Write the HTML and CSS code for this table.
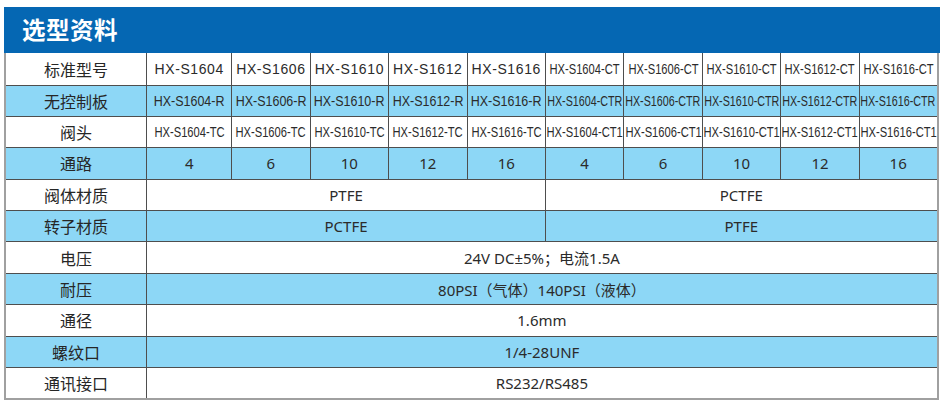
FILE: index.html
```html
<!DOCTYPE html>
<html lang="zh-CN">
<head>
<meta charset="utf-8">
<title>选型资料</title>
<link rel="stylesheet" href="styles.css">
</head>
<body>
<div class="sheet">
  <div class="title-bar"><h1 class="title">选型资料</h1></div>
  <table class="spec">
    <colgroup>
      <col class="c-label"><col class="c-first">
      <col class="c-data"><col class="c-data"><col class="c-data"><col class="c-data">
      <col class="c-data"><col class="c-data"><col class="c-data"><col class="c-data"><col class="c-data">
    </colgroup>
    <tbody>
      <tr class="row-top">
        <th>标准型号</th>
        <td class="wide">HX-S1604</td><td class="wide">HX-S1606</td><td class="wide">HX-S1610</td><td class="wide">HX-S1612</td><td class="wide">HX-S1616</td>
        <td><span class="fit"><span class="sq">HX-S1604-CT</span></span></td>
        <td><span class="fit"><span class="sq">HX-S1606-CT</span></span></td>
        <td><span class="fit"><span class="sq">HX-S1610-CT</span></span></td>
        <td><span class="fit"><span class="sq">HX-S1612-CT</span></span></td>
        <td><span class="fit"><span class="sq">HX-S1616-CT</span></span></td>
      </tr>
      <tr class="alt">
        <th>无控制板</th>
        <td><span class="fit"><span class="sq sq-r">HX-S1604-R</span></span></td>
        <td><span class="fit"><span class="sq sq-r">HX-S1606-R</span></span></td>
        <td><span class="fit"><span class="sq sq-r">HX-S1610-R</span></span></td>
        <td><span class="fit"><span class="sq sq-r">HX-S1612-R</span></span></td>
        <td><span class="fit"><span class="sq sq-r">HX-S1616-R</span></span></td>
        <td><span class="fit"><span class="sq sq-ctr">HX-S1604-CTR</span></span></td>
        <td><span class="fit"><span class="sq sq-ctr">HX-S1606-CTR</span></span></td>
        <td><span class="fit"><span class="sq sq-ctr">HX-S1610-CTR</span></span></td>
        <td><span class="fit"><span class="sq sq-ctr">HX-S1612-CTR</span></span></td>
        <td><span class="fit"><span class="sq sq-ctr">HX-S1616-CTR</span></span></td>
      </tr>
      <tr>
        <th>阀头</th>
        <td><span class="fit"><span class="sq">HX-S1604-TC</span></span></td>
        <td><span class="fit"><span class="sq">HX-S1606-TC</span></span></td>
        <td><span class="fit"><span class="sq">HX-S1610-TC</span></span></td>
        <td><span class="fit"><span class="sq">HX-S1612-TC</span></span></td>
        <td><span class="fit"><span class="sq">HX-S1616-TC</span></span></td>
        <td><span class="fit"><span class="sq">HX-S1604-CT1</span></span></td>
        <td><span class="fit"><span class="sq">HX-S1606-CT1</span></span></td>
        <td><span class="fit"><span class="sq">HX-S1610-CT1</span></span></td>
        <td><span class="fit"><span class="sq">HX-S1612-CT1</span></span></td>
        <td><span class="fit"><span class="sq">HX-S1616-CT1</span></span></td>
      </tr>
      <tr class="alt">
        <th>通路</th>
        <td>4</td><td>6</td><td>10</td><td>12</td><td>16</td>
        <td>4</td><td>6</td><td>10</td><td>12</td><td>16</td>
      </tr>
      <tr>
        <th>阀体材质</th>
        <td colspan="5">PTFE</td><td colspan="5">PCTFE</td>
      </tr>
      <tr class="alt">
        <th>转子材质</th>
        <td colspan="5">PCTFE</td><td colspan="5">PTFE</td>
      </tr>
      <tr>
        <th>电压</th>
        <td colspan="10">24V DC±5%；电流1.5A</td>
      </tr>
      <tr class="alt">
        <th>耐压</th>
        <td colspan="10">80PSI（气体）140PSI（液体）</td>
      </tr>
      <tr>
        <th>通径</th>
        <td colspan="10">1.6mm</td>
      </tr>
      <tr class="alt">
        <th>螺纹口</th>
        <td colspan="10">1/4-28UNF</td>
      </tr>
      <tr class="row-last">
        <th>通讯接口</th>
        <td colspan="10">RS232/RS485</td>
      </tr>
    </tbody>
  </table>
</div>
</body>
</html>
```

FILE: styles.css
```css
html, body {
  margin: 0;
  padding: 0;
  background: #ffffff;
}

.sheet {
  padding: 7px 0 0 4px;
  width: 936px;
}

.title-bar {
  background: #0567b3;
  height: 46px;
  display: flex;
  align-items: center;
  padding-left: 18px;
  box-sizing: border-box;
}

.title {
  margin: 0;
  color: #ffffff;
  font-family: "Noto Sans CJK SC", "Noto Sans", sans-serif;
  font-weight: 700;
  font-size: 23.5px;
  letter-spacing: 0.5px;
  line-height: 1;
  padding-bottom: 1px;
}

.spec {
  border-collapse: collapse;
  table-layout: fixed;
  width: 933px;
  border-left: 2px solid #a0a0a0;
  border-right: 2px solid #a0a0a0;
  border-bottom: 2px solid #a0a0a0;
  font-family: "Noto Sans", "Noto Sans CJK SC", sans-serif;
  color: #2b2b2b;
}

.c-label { width: 141.7px; }
.c-first { width: 85px; }
.c-data { width: 78.44px; }

.spec tr {
  height: 31.4px;
}

.spec tr.row-top {
  height: 32px;
}

.spec tr.alt {
  background: #8dd7f6;
}

.spec th,
.spec td {
  border: 1px solid #4e4e4e;
  padding: 0;
  text-align: center;
  vertical-align: middle;
  white-space: nowrap;
  overflow: hidden;
}

.spec tr:first-child th,
.spec tr:first-child td {
  border-top: none;
}

.spec th {
  font-family: "Noto Sans CJK SC", sans-serif;
  font-weight: 400;
  font-size: 16px;
  color: #262626;
}

.spec td {
  font-size: 15px;
}

.spec td.wide {
  font-family: "Liberation Sans", "Noto Sans", sans-serif;
  font-size: 14px;
  letter-spacing: 0.6px;
}

.fit {
  display: flex;
  justify-content: center;
}

.sq {
  flex: none;
  display: block;
  font-family: "Liberation Sans", sans-serif;
  font-size: 14.5px;
  transform: scaleX(0.77);
}

.sq-r {
  transform: scaleX(0.86);
}

.sq-ctr {
  transform: scaleX(0.74);
}
```
